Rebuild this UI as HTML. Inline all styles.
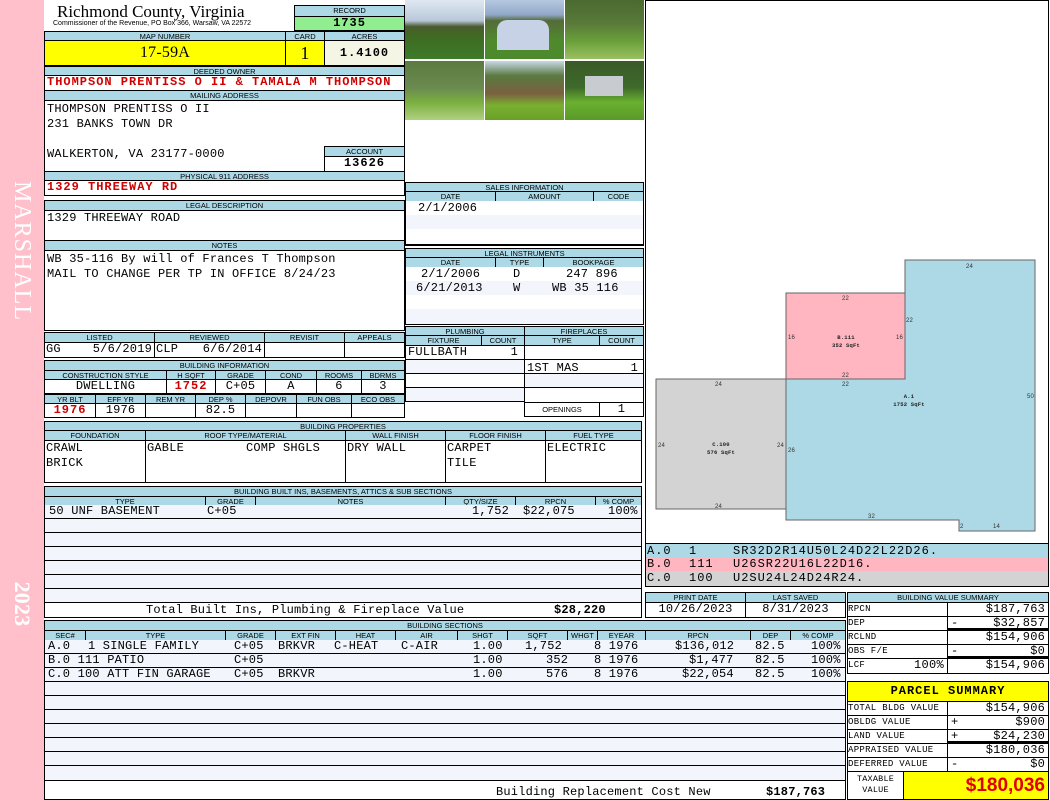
<!DOCTYPE html>
<html><head><meta charset="utf-8"><style>
*{box-sizing:border-box;margin:0;padding:0}
body{width:1050px;height:800px;position:relative;background:#fff;overflow:hidden;font-family:"Liberation Mono",monospace;font-size:12px;letter-spacing:.2px;color:#000}
div{position:absolute}
.h{background:#add8e6;border:1px solid #000;font:7.5px/9px "Liberation Sans",sans-serif;letter-spacing:0;text-align:center;white-space:nowrap;overflow:hidden}
.c{border:1px solid #000;white-space:nowrap;overflow:hidden;line-height:13px}
.s{background:#f2f5fc;border-bottom:1px solid #000;border-left:1px solid #000;border-right:1px solid #000;height:14px;line-height:13px}
.r{text-align:right;padding-right:3px}
.ctr{text-align:center}
.red{color:#d00000;font-weight:bold;letter-spacing:1px}
.sm{font-size:9px!important;letter-spacing:.3px}
</style></head><body>
<!-- sidebar -->
<div style="left:0;top:0;width:44px;height:800px;background:#ffc0cb"></div>
<div style="left:-58px;top:239px;width:160px;height:24px;transform:rotate(90deg);color:#fff;font:24px/24px 'Liberation Serif',serif;text-align:center;letter-spacing:1px">MARSHALL</div>
<div style="left:-30px;top:592px;width:104px;height:24px;transform:rotate(90deg);color:#fff;font:bold 22px/24px 'Liberation Serif',serif;text-align:center">2023</div>

<!-- title -->
<div style="left:57px;top:2px;font:17px/19px 'Liberation Serif',serif;letter-spacing:0">Richmond County, Virginia</div>
<div style="left:53px;top:20px;font:7px/8px 'Liberation Sans',sans-serif;letter-spacing:0">Commissioner of the Revenue, PO Box 366, Warsaw, VA 22572</div>
<div class="h" style="left:294px;top:5px;width:111px;height:12px;line-height:10px">RECORD</div>
<div class="c ctr" style="left:294px;top:16px;width:111px;height:15px;background:#90ee90;font-weight:bold;letter-spacing:1px">1735</div>
<div class="h" style="left:44px;top:31px;width:242px;height:10px">MAP NUMBER</div>
<div class="h" style="left:285px;top:31px;width:40px;height:10px">CARD</div>
<div class="h" style="left:324px;top:31px;width:81px;height:10px">ACRES</div>
<div class="c ctr" style="left:44px;top:40px;width:242px;height:26px;background:#ff0;font:16px/24px 'Liberation Serif',serif">17-59A</div>
<div class="c ctr" style="left:285px;top:40px;width:40px;height:26px;background:#ff0;font:18px/24px 'Liberation Serif',serif">1</div>
<div class="c ctr" style="left:324px;top:40px;width:81px;height:26px;background:#f5f5e6;font-weight:bold;line-height:24px;letter-spacing:1px">1.4100</div>
<div class="h" style="left:44px;top:66px;width:361px;height:10px">DEEDED OWNER</div>
<div class="c red" style="left:44px;top:75px;width:361px;height:16px;padding-left:2px">THOMPSON PRENTISS O II &amp; TAMALA M THOMPSON</div>
<div class="h" style="left:44px;top:90px;width:361px;height:11px">MAILING ADDRESS</div>
<div class="c" style="left:44px;top:100px;width:361px;height:72px;padding:1px 2px;line-height:15px">THOMPSON PRENTISS O II<br>231 BANKS TOWN DR<br><br>WALKERTON, VA 23177-0000</div>
<div class="h" style="left:324px;top:146px;width:81px;height:11px">ACCOUNT</div>
<div class="c ctr" style="left:324px;top:156px;width:81px;height:16px;font-weight:bold;letter-spacing:1px">13626</div>
<div class="h" style="left:44px;top:171px;width:361px;height:10px">PHYSICAL 911 ADDRESS</div>
<div class="c red" style="left:44px;top:180px;width:361px;height:16px;padding-left:2px">1329 THREEWAY RD</div>
<div class="h" style="left:44px;top:200px;width:361px;height:11px">LEGAL DESCRIPTION</div>
<div class="c" style="left:44px;top:210px;width:361px;height:31px;padding:1px 2px">1329 THREEWAY ROAD</div>
<div class="h" style="left:44px;top:240px;width:361px;height:11px">NOTES</div>
<div class="c" style="left:44px;top:250px;width:361px;height:81px;padding:1px 2px;line-height:15px">WB 35-116 By will of Frances T Thompson<br>MAIL TO CHANGE PER TP IN OFFICE 8/24/23</div>

<!-- listed -->
<div class="h" style="left:44px;top:332px;width:111px;height:11px">LISTED</div>
<div class="h" style="left:154px;top:332px;width:111px;height:11px">REVIEWED</div>
<div class="h" style="left:264px;top:332px;width:81px;height:11px">REVISIT</div>
<div class="h" style="left:344px;top:332px;width:61px;height:11px">APPEALS</div>
<div class="c" style="left:44px;top:342px;width:111px;height:16px;padding-left:1px">GG<span style="position:absolute;right:2px">5/6/2019</span></div>
<div class="c" style="left:154px;top:342px;width:111px;height:16px;padding-left:1px">CLP<span style="position:absolute;right:2px">6/6/2014</span></div>
<div class="c" style="left:264px;top:342px;width:81px;height:16px"></div>
<div class="c" style="left:344px;top:342px;width:61px;height:16px"></div>

<div class="h" style="left:44px;top:360px;width:361px;height:11px">BUILDING INFORMATION</div>
<div class="h" style="left:44px;top:370px;width:123px;height:10px">CONSTRUCTION STYLE</div>
<div class="h" style="left:166px;top:370px;width:50px;height:10px">H SQFT</div>
<div class="h" style="left:215px;top:370px;width:51px;height:10px">GRADE</div>
<div class="h" style="left:265px;top:370px;width:52px;height:10px">COND</div>
<div class="h" style="left:316px;top:370px;width:46px;height:10px">ROOMS</div>
<div class="h" style="left:361px;top:370px;width:44px;height:10px">BDRMS</div>
<div class="c ctr" style="left:44px;top:379px;width:123px;height:15px">DWELLING</div>
<div class="c ctr red" style="left:166px;top:379px;width:50px;height:15px">1752</div>
<div class="c ctr" style="left:215px;top:379px;width:51px;height:15px">C+05</div>
<div class="c ctr" style="left:265px;top:379px;width:52px;height:15px">A</div>
<div class="c ctr" style="left:316px;top:379px;width:46px;height:15px">6</div>
<div class="c ctr" style="left:361px;top:379px;width:44px;height:15px">3</div>
<div class="h" style="left:44px;top:394px;width:52px;height:10px">YR BLT</div>
<div class="h" style="left:95px;top:394px;width:51px;height:10px">EFF YR</div>
<div class="h" style="left:145px;top:394px;width:51px;height:10px">REM YR</div>
<div class="h" style="left:195px;top:394px;width:51px;height:10px">DEP %</div>
<div class="h" style="left:245px;top:394px;width:52px;height:10px">DEPOVR</div>
<div class="h" style="left:296px;top:394px;width:56px;height:10px">FUN OBS</div>
<div class="h" style="left:351px;top:394px;width:54px;height:10px">ECO OBS</div>
<div class="c ctr red" style="left:44px;top:403px;width:52px;height:15px">1976</div>
<div class="c ctr" style="left:95px;top:403px;width:51px;height:15px">1976</div>
<div class="c" style="left:145px;top:403px;width:51px;height:15px"></div>
<div class="c ctr" style="left:195px;top:403px;width:51px;height:15px">82.5</div>
<div class="c" style="left:245px;top:403px;width:52px;height:15px"></div>
<div class="c" style="left:296px;top:403px;width:56px;height:15px"></div>
<div class="c" style="left:351px;top:403px;width:54px;height:15px"></div>

<!-- building properties -->
<div class="h" style="left:44px;top:421px;width:598px;height:10px">BUILDING PROPERTIES</div>
<div class="h" style="left:44px;top:430px;width:102px;height:11px">FOUNDATION</div>
<div class="h" style="left:145px;top:430px;width:201px;height:11px">ROOF TYPE/MATERIAL</div>
<div class="h" style="left:345px;top:430px;width:101px;height:11px">WALL FINISH</div>
<div class="h" style="left:445px;top:430px;width:101px;height:11px">FLOOR FINISH</div>
<div class="h" style="left:545px;top:430px;width:97px;height:11px">FUEL TYPE</div>
<div class="c" style="left:44px;top:440px;width:102px;height:43px;line-height:15px;padding-left:1px">CRAWL<br>BRICK</div>
<div class="c" style="left:145px;top:440px;width:201px;height:43px;line-height:15px;padding-left:1px">GABLE<span style="position:absolute;left:100px">COMP SHGLS</span></div>
<div class="c" style="left:345px;top:440px;width:101px;height:43px;line-height:15px;padding-left:1px">DRY WALL</div>
<div class="c" style="left:445px;top:440px;width:101px;height:43px;line-height:15px;padding-left:1px">CARPET<br>TILE</div>
<div class="c" style="left:545px;top:440px;width:97px;height:43px;line-height:15px;padding-left:1px">ELECTRIC</div>

<!-- built ins -->
<div class="h" style="left:44px;top:486px;width:598px;height:11px">BUILDING BUILT INS, BASEMENTS, ATTICS &amp; SUB SECTIONS</div>
<div class="h" style="left:44px;top:496px;width:162px;height:10px">TYPE</div>
<div class="h" style="left:205px;top:496px;width:51px;height:10px">GRADE</div>
<div class="h" style="left:255px;top:496px;width:191px;height:10px">NOTES</div>
<div class="h" style="left:445px;top:496px;width:71px;height:10px">QTY/SIZE</div>
<div class="h" style="left:515px;top:496px;width:81px;height:10px">RPCN</div>
<div class="h" style="left:595px;top:496px;width:47px;height:10px">% COMP</div>
<div class="s" style="left:44px;top:505px;width:598px"><span style="position:absolute;left:4px">50 UNF BASEMENT</span><span style="position:absolute;left:162px">C+05</span><span style="position:absolute;left:427px">1,752</span><span style="position:absolute;left:478px">$22,075</span><span style="position:absolute;left:563px">100%</span></div>
<div class="s" style="left:44px;top:519px;width:598px"></div>
<div class="s" style="left:44px;top:533px;width:598px"></div>
<div class="s" style="left:44px;top:547px;width:598px"></div>
<div class="s" style="left:44px;top:561px;width:598px"></div>
<div class="s" style="left:44px;top:575px;width:598px"></div>
<div class="s" style="left:44px;top:589px;width:598px"></div>
<div class="c" style="left:44px;top:602px;width:598px;height:16px;line-height:15px"><span style="position:absolute;left:101px">Total Built Ins, Plumbing &amp; Fireplace Value</span><span style="position:absolute;left:509px;font-weight:bold">$28,220</span></div>

<!-- building sections -->
<div class="h" style="left:44px;top:620px;width:802px;height:11px">BUILDING SECTIONS</div>
<div class="h" style="left:44px;top:630px;width:42px;height:11px">SEC#</div>
<div class="h" style="left:85px;top:630px;width:141px;height:11px">TYPE</div>
<div class="h" style="left:225px;top:630px;width:51px;height:11px">GRADE</div>
<div class="h" style="left:275px;top:630px;width:61px;height:11px">EXT FIN</div>
<div class="h" style="left:335px;top:630px;width:61px;height:11px">HEAT</div>
<div class="h" style="left:395px;top:630px;width:63px;height:11px">AIR</div>
<div class="h" style="left:457px;top:630px;width:51px;height:11px">SHGT</div>
<div class="h" style="left:507px;top:630px;width:61px;height:11px">SQFT</div>
<div class="h" style="left:567px;top:630px;width:31px;height:11px">WHGT</div>
<div class="h" style="left:597px;top:630px;width:49px;height:11px">EYEAR</div>
<div class="h" style="left:645px;top:630px;width:106px;height:11px">RPCN</div>
<div class="h" style="left:750px;top:630px;width:41px;height:11px">DEP</div>
<div class="h" style="left:790px;top:630px;width:56px;height:11px">% COMP</div>
<div class="s" style="left:44px;top:640px;width:802px"><span style="position:absolute;left:3px">A.0</span><span style="position:absolute;left:43px">1 SINGLE FAMILY</span><span style="position:absolute;left:189px">C+05</span><span style="position:absolute;left:233px">BRKVR</span><span style="position:absolute;left:289px">C-HEAT</span><span style="position:absolute;left:356px">C-AIR</span><span style="position:absolute;left:428px">1.00</span><span style="position:absolute;left:480px">1,752</span><span style="position:absolute;left:549px">8 1976</span><span style="position:absolute;left:630px">$136,012</span><span style="position:absolute;left:710px">82.5</span><span style="position:absolute;left:766px">100%</span></div>
<div class="s" style="left:44px;top:654px;width:802px"><span style="position:absolute;left:3px">B.0 111 PATIO</span><span style="position:absolute;left:189px">C+05</span><span style="position:absolute;left:428px">1.00</span><span style="position:absolute;left:501px">352</span><span style="position:absolute;left:549px">8 1976</span><span style="position:absolute;left:644px">$1,477</span><span style="position:absolute;left:710px">82.5</span><span style="position:absolute;left:766px">100%</span></div>
<div class="s" style="left:44px;top:668px;width:802px"><span style="position:absolute;left:3px">C.0 100 ATT FIN GARAGE</span><span style="position:absolute;left:189px">C+05</span><span style="position:absolute;left:233px">BRKVR</span><span style="position:absolute;left:428px">1.00</span><span style="position:absolute;left:501px">576</span><span style="position:absolute;left:549px">8 1976</span><span style="position:absolute;left:637px">$22,054</span><span style="position:absolute;left:710px">82.5</span><span style="position:absolute;left:766px">100%</span></div>
<div class="s" style="left:44px;top:682px;width:802px"></div>
<div class="s" style="left:44px;top:696px;width:802px"></div>
<div class="s" style="left:44px;top:710px;width:802px"></div>
<div class="s" style="left:44px;top:724px;width:802px"></div>
<div class="s" style="left:44px;top:738px;width:802px"></div>
<div class="s" style="left:44px;top:752px;width:802px"></div>
<div class="s" style="left:44px;top:766px;width:802px;height:15px"></div>
<div class="c" style="left:44px;top:780px;width:802px;height:20px;line-height:22px;background:#fff"><span style="position:absolute;left:451px">Building Replacement Cost New</span><span style="position:absolute;left:721px;font-weight:bold">$187,763</span></div>

<!-- photos -->
<div style="left:405px;top:0;width:79px;height:59px;background:linear-gradient(#dfe8f2 0,#b8c8d8 35%,#4a5a30 45%,#3f6a22 60%,#3c7a28 100%)"></div>
<div style="left:485px;top:0;width:79px;height:59px;background:linear-gradient(#b5c8e0 0,#90a8c8 25%,#556b3a 35%,#4f8a2c 70%,#4b8a2c 100%)"><div style="left:12px;top:20px;width:52px;height:30px;background:#c8d2e6;border-radius:10px 10px 0 0"></div></div>
<div style="left:565px;top:0;width:79px;height:59px;background:linear-gradient(#4a6a30 0,#5a7a3a 40%,#6aa03a 70%,#9ac060 100%)"></div>
<div style="left:405px;top:61px;width:79px;height:59px;background:linear-gradient(#5a7a40 0,#6a8a50 45%,#7ab040 70%,#b0d080 100%)"></div>
<div style="left:485px;top:61px;width:79px;height:59px;background:linear-gradient(#c8d8e8 0,#5a7a40 25%,#7a6040 55%,#7ab030 75%,#6aa028 100%)"></div>
<div style="left:565px;top:61px;width:79px;height:59px;background:linear-gradient(#3a5a28 0,#3e6a2a 45%,#6ab030 70%,#5a9a28 100%)"><div style="left:20px;top:15px;width:38px;height:20px;background:#c8ccd0"></div></div>

<!-- sales -->
<div class="c" style="left:405px;top:182px;width:239px;height:64px"></div>
<div class="h" style="left:405px;top:182px;width:239px;height:10px">SALES INFORMATION</div>
<div class="h" style="left:405px;top:191px;width:91px;height:11px">DATE</div>
<div class="h" style="left:495px;top:191px;width:99px;height:11px">AMOUNT</div>
<div class="h" style="left:593px;top:191px;width:51px;height:11px">CODE</div>
<div class="s" style="left:405px;top:201px;width:239px;height:15px;background:#fff;line-height:15px;padding-left:12px">2/1/2006</div>
<div class="s" style="left:405px;top:215px;width:239px;height:15px"></div>
<div class="s" style="left:405px;top:229px;width:239px;height:16px;background:#fff"></div>
<div class="h" style="left:405px;top:248px;width:239px;height:10px">LEGAL INSTRUMENTS</div>
<div class="h" style="left:405px;top:257px;width:91px;height:11px">DATE</div>
<div class="h" style="left:495px;top:257px;width:49px;height:11px">TYPE</div>
<div class="h" style="left:543px;top:257px;width:101px;height:11px">BOOKPAGE</div>
<div class="s" style="left:405px;top:267px;width:239px;height:15px;background:#fff;line-height:15px"><span style="position:absolute;left:15px">2/1/2006</span><span style="position:absolute;left:107px">D</span><span style="position:absolute;left:160px">247 896</span></div>
<div class="s" style="left:405px;top:281px;width:239px;height:15px;line-height:15px"><span style="position:absolute;left:10px">6/21/2013</span><span style="position:absolute;left:107px">W</span><span style="position:absolute;left:146px">WB 35 116</span></div>
<div class="s" style="left:405px;top:295px;width:239px;height:15px;background:#fff"></div>
<div class="s" style="left:405px;top:309px;width:239px;height:16px"></div>
<!-- plumbing -->
<div class="h" style="left:405px;top:326px;width:120px;height:10px">PLUMBING</div>
<div class="h" style="left:524px;top:326px;width:120px;height:10px">FIREPLACES</div>
<div class="h" style="left:405px;top:335px;width:77px;height:11px">FIXTURE</div>
<div class="h" style="left:481px;top:335px;width:44px;height:11px">COUNT</div>
<div class="h" style="left:524px;top:335px;width:76px;height:11px">TYPE</div>
<div class="h" style="left:599px;top:335px;width:45px;height:11px">COUNT</div>
<div class="c" style="left:405px;top:345px;width:120px;height:15px"><span style="position:absolute;left:2px">FULLBATH</span><span style="position:absolute;right:6px">1</span></div>
<div class="c" style="left:405px;top:359px;width:120px;height:15px;background:#f2f5fc"></div>
<div class="c" style="left:405px;top:373px;width:120px;height:15px"></div>
<div class="c" style="left:405px;top:387px;width:120px;height:15px;background:#f2f5fc"></div>
<div class="c" style="left:524px;top:345px;width:120px;height:15px"></div>
<div class="c" style="left:524px;top:359px;width:120px;height:15px;line-height:16px"><span style="position:absolute;left:2px">1ST MAS</span><span style="position:absolute;right:5px">1</span></div>
<div class="c" style="left:524px;top:373px;width:120px;height:15px;background:#f2f5fc"></div>
<div class="c" style="left:524px;top:387px;width:120px;height:16px"></div>
<div class="c" style="left:524px;top:402px;width:76px;height:15px;font:7.5px/13px 'Liberation Sans',sans-serif;text-align:center;letter-spacing:0">OPENINGS</div>
<div class="c ctr" style="left:599px;top:402px;width:45px;height:15px">1</div>

<!-- sketch -->
<div style="left:645px;top:0;width:404px;height:544px;border:1px solid #000"></div>
<svg style="position:absolute;left:0;top:0" width="1050" height="545">
<rect x="656" y="379" width="130" height="130" fill="#d3d3d3" stroke="#666"/>
<polygon points="905,260 1035,260 1035,531 959,531 959,520 786,520 786,379 905,379" fill="#add8e6" stroke="#666"/>
<rect x="786" y="293" width="119" height="86" fill="#ffb6c1" stroke="#666"/>
<g font-family="Liberation Sans,sans-serif" font-size="6" fill="#333">
<text x="966" y="268">24</text><text x="842" y="300">22</text><text x="906" y="322">22</text>
<text x="788" y="339">16</text><text x="896" y="339">16</text><text x="842" y="377">22</text><text x="842" y="386">22</text>
<text x="1027" y="398">50</text><text x="715" y="386">24</text><text x="658" y="447">24</text><text x="777" y="447">24</text><text x="788" y="452">26</text>
<text x="715" y="508">24</text><text x="868" y="518">32</text><text x="960" y="528">2</text><text x="993" y="528">14</text>
</g>
<g font-family="Liberation Mono,monospace" font-size="5.5" font-weight="bold" fill="#222" text-anchor="middle">
<text x="846" y="339">B.111</text><text x="846" y="347">352 SqFt</text>
<text x="909" y="398">A.1</text><text x="909" y="406">1752 SqFt</text>
<text x="721" y="446">C.100</text><text x="721" y="454">576 SqFt</text>
</g>
</svg>
<div class="c" style="left:645px;top:543px;width:404px;height:15px;background:#add8e6;line-height:14px;padding-left:1px;letter-spacing:1px"><span>A.0</span><span style="position:absolute;left:43px">1</span><span style="position:absolute;left:87px">SR32D2R14U50L24D22L22D26.</span></div>
<div class="c" style="left:645px;top:557px;width:404px;height:15px;background:#ffb6c1;line-height:14px;padding-left:1px;border-top:0;letter-spacing:1px"><span>B.0</span><span style="position:absolute;left:43px">111</span><span style="position:absolute;left:87px">U26SR22U16L22D16.</span></div>
<div class="c" style="left:645px;top:571px;width:404px;height:16px;background:#d3d3d3;line-height:14px;padding-left:1px;border-top:0;letter-spacing:1px"><span>C.0</span><span style="position:absolute;left:43px">100</span><span style="position:absolute;left:87px">U2SU24L24D24R24.</span></div>

<!-- print date -->
<div class="h" style="left:645px;top:592px;width:101px;height:11px">PRINT DATE</div>
<div class="h" style="left:745px;top:592px;width:101px;height:11px">LAST SAVED</div>
<div class="c ctr" style="left:645px;top:602px;width:101px;height:16px">10/26/2023</div>
<div class="c ctr" style="left:745px;top:602px;width:101px;height:16px">8/31/2023</div>

<!-- building value summary -->
<div class="h" style="left:847px;top:592px;width:202px;height:11px">BUILDING VALUE SUMMARY</div>
<div class="c sm" style="left:847px;top:602px;width:101px;height:15px">RPCN</div><div class="c r" style="left:947px;top:602px;width:102px;height:15px">$187,763</div>
<div class="c sm" style="left:847px;top:616px;width:101px;height:15px">DEP</div><div class="c r" style="left:947px;top:616px;width:102px;height:15px;border-bottom:3px solid #000"><span style="position:absolute;left:3px">-</span>$32,857</div>
<div class="c sm" style="left:847px;top:630px;width:101px;height:15px">RCLND</div><div class="c r" style="left:947px;top:630px;width:102px;height:15px">$154,906</div>
<div class="c sm" style="left:847px;top:644px;width:101px;height:15px">OBS F/E</div><div class="c r" style="left:947px;top:644px;width:102px;height:15px;border-bottom:3px solid #000"><span style="position:absolute;left:3px">-</span>$0</div>
<div class="c sm" style="left:847px;top:658px;width:101px;height:16px">LCF<span style="position:absolute;right:3px;font-size:12px">100%</span></div><div class="c r" style="left:947px;top:658px;width:102px;height:16px">$154,906</div>

<!-- parcel summary -->
<div class="c ctr" style="left:847px;top:681px;width:202px;height:21px;background:#ff0;font-weight:bold;line-height:19px;letter-spacing:1px">PARCEL SUMMARY</div>
<div class="c sm" style="left:847px;top:701px;width:101px;height:15px">TOTAL BLDG VALUE</div><div class="c r" style="left:947px;top:701px;width:102px;height:15px">$154,906</div>
<div class="c sm" style="left:847px;top:715px;width:101px;height:15px">OBLDG VALUE</div><div class="c r" style="left:947px;top:715px;width:102px;height:15px"><span style="position:absolute;left:3px">+</span>$900</div>
<div class="c sm" style="left:847px;top:729px;width:101px;height:15px">LAND VALUE</div><div class="c r" style="left:947px;top:729px;width:102px;height:15px;border-bottom:3px solid #000"><span style="position:absolute;left:3px">+</span>$24,230</div>
<div class="c sm" style="left:847px;top:743px;width:101px;height:15px">APPRAISED VALUE</div><div class="c r" style="left:947px;top:743px;width:102px;height:15px">$180,036</div>
<div class="c sm" style="left:847px;top:757px;width:101px;height:15px">DEFERRED VALUE</div><div class="c r" style="left:947px;top:757px;width:102px;height:15px"><span style="position:absolute;left:3px">-</span>$0</div>
<div class="c ctr" style="left:847px;top:771px;width:57px;height:29px;font-size:8.5px;line-height:11px;padding-top:2px">TAXABLE<br>VALUE</div>
<div class="c" style="left:903px;top:771px;width:146px;height:29px;background:#ff0;color:#e00000;font:bold 19px/27px 'Liberation Sans',sans-serif;text-align:right;padding-right:3px;letter-spacing:0">$180,036</div>
</body></html>
